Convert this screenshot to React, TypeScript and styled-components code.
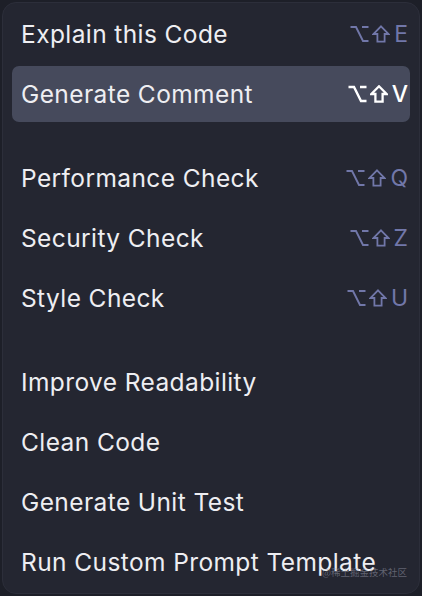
import React from 'react'
import styled, { createGlobalStyle } from 'styled-components'

const GlobalStyle = createGlobalStyle`
  html, body {
    margin: 0;
    padding: 0;
    background: #1d1f28;
  }
  body {
    font-family: Inter, "Noto Sans", "Noto Sans CJK SC", sans-serif;
    -webkit-font-smoothing: antialiased;
  }
`

const Panel = styled.div`
  position: relative;
  box-sizing: border-box;
  display: flex;
  flex-direction: column;
  margin: 2px 2px 0 2px;
  width: 418px;
  height: 592px;
  padding-top: 1px;
  background: #242631;
  border: 1px solid #2c2e3a;
  border-radius: 14px;
  overflow: hidden;
`

const Item = styled.div<{ $active?: boolean }>`
  display: flex;
  flex-shrink: 0;
  align-items: center;
  justify-content: space-between;
  height: 56px;
  margin: 2px 9px;
  padding: 0 2px 0 9px;
  border-radius: 7px;
  background: ${(p) => (p.$active ? '#464a5c' : 'transparent')};
`

const Label = styled.span`
  font-size: 24.5px;
  color: #eeeef2;
  letter-spacing: 0.4px;
`

const Shortcut = styled.span<{ $active?: boolean }>`
  display: flex;
  align-items: center;
  color: ${(p) => (p.$active ? '#ffffff' : '#7177a9')};
  font-size: 23px;
  font-weight: ${(p) => (p.$active ? 500 : 400)};
`

const Key = styled.span`
  display: inline-block;
  margin-left: 4px;
  min-width: 12px;
  text-align: center;
`

const IconGap = styled.span`
  display: inline-block;
  width: 3px;
`

const Separator = styled.div`
  flex-shrink: 0;
  height: 24px;
`

const Watermark = styled.div`
  position: absolute;
  right: 12px;
  bottom: 14px;
  font-size: 9.5px;
  color: rgba(150, 152, 168, 0.55);
  font-family: "Noto Sans CJK SC", sans-serif;
`

const OptionIcon = ({ bold }: { bold?: boolean }) => (
  <svg width="19" height="18" viewBox="0 0 19 18" fill="none">
    <path
      d="M0.5 2 H6 L13 16 H18.5 M12 2 H18.5"
      stroke="currentColor"
      strokeWidth={bold ? 2.4 : 1.9}
    />
  </svg>
)

const ShiftIcon = ({ bold }: { bold?: boolean }) => (
  <svg width="18" height="18" viewBox="0 0 18 18" fill="none">
    <path
      d="M9 1.3 L16.6 9 H12.6 V16.6 H5.4 V9 H1.4 Z"
      stroke="currentColor"
      strokeWidth={bold ? 2.3 : 1.8}
      strokeLinejoin="miter"
    />
  </svg>
)

type Entry = { label: string; key?: string; active?: boolean } | 'sep'

const entries: Entry[] = [
  { label: 'Explain this Code', key: 'E' },
  { label: 'Generate Comment', key: 'V', active: true },
  'sep',
  { label: 'Performance Check', key: 'Q' },
  { label: 'Security Check', key: 'Z' },
  { label: 'Style Check', key: 'U' },
  'sep',
  { label: 'Improve Readability' },
  { label: 'Clean Code' },
  { label: 'Generate Unit Test' },
  { label: 'Run Custom Prompt Template' },
]

const App = () => (
  <>
    <GlobalStyle />
    <Panel>
      {entries.map((e, i) =>
        e === 'sep' ? (
          <Separator key={i} />
        ) : (
          <Item key={i} $active={e.active}>
            <Label>{e.label}</Label>
            {e.key && (
              <Shortcut $active={e.active}>
                <OptionIcon bold={e.active} />
                <IconGap />
                <ShiftIcon bold={e.active} />
                <Key>{e.key}</Key>
              </Shortcut>
            )}
          </Item>
        )
      )}
      <Watermark>@稀土掘金技术社区</Watermark>
    </Panel>
  </>
)

export default App
